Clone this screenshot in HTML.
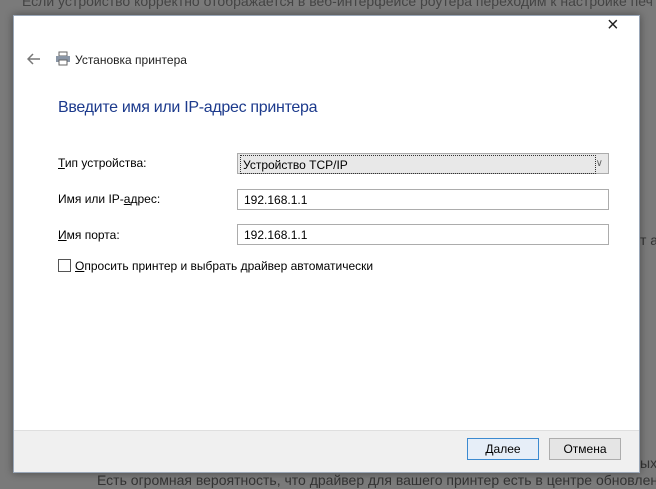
<!DOCTYPE html>
<html><head><meta charset="utf-8"><style>
body{margin:0;width:656px;height:489px;overflow:hidden;background:#7a7a7a;font-family:"Liberation Sans",sans-serif;position:relative}
.bg{position:absolute;color:#333;font-size:14px;white-space:nowrap}
.dlg{position:absolute;left:13px;top:15px;width:625px;height:456px;background:#fff;border:1px solid #9aa7b8;box-shadow:0 0 8px rgba(0,0,0,.4)}
.t{position:absolute;font-size:12px;color:#000;white-space:nowrap}
.box{position:absolute;left:223px;width:372px;height:21px;border:1px solid #acacac;background:#fff;font-size:12px;line-height:21px;box-sizing:border-box;padding-left:6px}
.foot{position:absolute;left:0;right:0;bottom:0;height:41px;background:#f0f0f0;border-top:1px solid #dfdfdf}
.btn{position:absolute;top:7px;width:72px;height:22px;border:1px solid #adadad;background:#e5e5e5;font-size:12px;text-align:center;line-height:21px;box-sizing:border-box}
</style></head><body>
<div class="bg" style="left:22px;top:-7px;color:#444">Если устройство корректно отображается в веб-интерфейсе роутера переходим к настройке печ</div>
<div class="bg" style="left:640px;top:232px">т а</div>
<div class="bg" style="left:640px;top:455px">ых</div>
<div class="bg" style="left:97px;top:472px">Есть огромная вероятность, что драйвер для вашего принтер есть в центре обновлен</div>
<div class="dlg">
<div class="t" style="left:593px;top:-1px;font-size:20px;color:#222;line-height:20px;padding-top:0">×</div>
<svg style="position:absolute;left:13px;top:37px" width="14" height="12"><path d="M13 6H2M6 1L1 6l5 5" stroke="#777" stroke-width="1.5" fill="none"/></svg>
<svg style="position:absolute;left:41px;top:35px" width="16" height="15"><rect x="4" y="1" width="8" height="4" fill="#fff" stroke="#666"/><rect x="1" y="5" width="14" height="6" fill="#8a96a6"/><rect x="4" y="9" width="8" height="5" fill="#fff" stroke="#666"/></svg>
<div class="t" style="left:61px;top:37px;color:#222">Установка принтера</div>
<div class="t" style="left:44px;top:83px;font-size:16px;color:#1c3a8c;letter-spacing:-0.3px">Введите имя или IP-адрес принтера</div>
<div class="t" style="left:44px;top:140px"><u>Т</u>ип устройства:</div>
<div class="t" style="left:44px;top:176px">Имя или IP-<u>а</u>дрес:</div>
<div class="t" style="left:44px;top:212px"><u>И</u>мя порта:</div>
<div class="box" style="top:137px;background:#e8e8e8;padding-left:2px;line-height:19px"><span style="border:1px dotted #333;display:block;margin-top:1px;width:352px;height:17px;padding-left:2px">Устройство TCP/IP</span><span style="position:absolute;right:5px;top:0;color:#666;font-size:10px">∨</span></div>
<div class="box" style="top:173px">192.168.1.1</div>
<div class="box" style="top:208px">192.168.1.1</div>
<div style="position:absolute;left:44px;top:243px;width:13px;height:13px;border:1px solid #555;box-sizing:border-box"></div>
<div class="t" style="left:61px;top:243px"><u>О</u>просить принтер и выбрать драйвер автоматически</div>
<div class="foot">
<div class="btn" style="left:453px;border-color:#3c8ad0;background:#e6eef8"><u>Д</u>алее</div>
<div class="btn" style="left:535px">Отмена</div>
</div>
</div>
</body></html>
